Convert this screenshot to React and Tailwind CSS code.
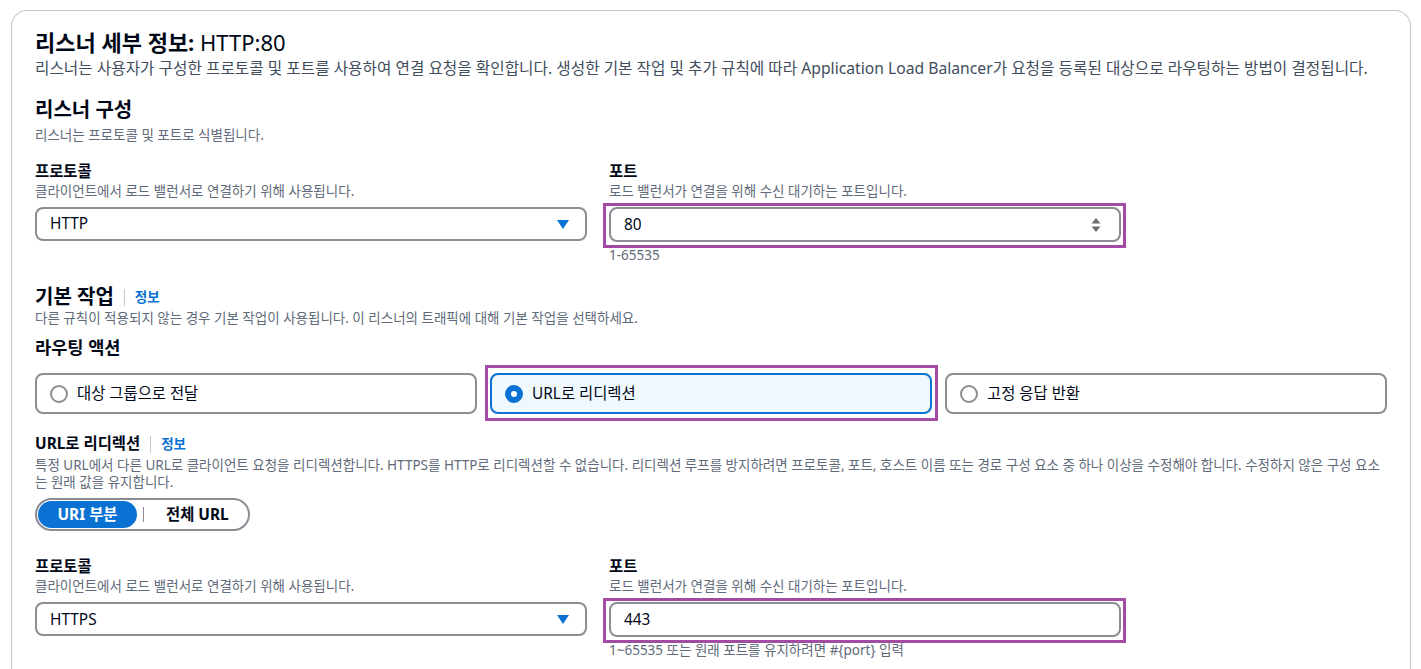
import React from 'react'

const font = { fontFamily: '"Noto Sans", "Noto Sans CJK KR", sans-serif' }

function Highlight({ className }) {
  return <div className={`pointer-events-none absolute border-[3px] border-[#a24ba3] ${className}`} />
}

function Caret() {
  return (
    <svg width="12" height="9" viewBox="0 0 12 9" className="shrink-0">
      <path d="M0 0h12L6 9z" fill="#0972d3" />
    </svg>
  )
}

function Select({ value }) {
  return (
    <div className="flex h-[34px] items-center justify-between rounded-lg border-2 border-[#8c8c94] bg-white pl-[13px] pr-[16px] text-[15.4px] text-[#000716]">
      <span>{value}</span>
      <Caret />
    </div>
  )
}

function NumberInput({ value, spinner }) {
  return (
    <div className="flex h-[35px] items-center justify-between rounded-lg border-2 border-[#8c8c94] bg-white pl-[13px] pr-[18px] text-[15.4px] text-[#000716]">
      <span>{value}</span>
      {spinner && (
        <svg width="10" height="16" viewBox="0 0 10 16">
          <path d="M5 1L9.5 6.5H0.5z" fill="#6b6b73" />
          <path d="M5 15L9.5 9.5H0.5z" fill="#6b6b73" />
        </svg>
      )}
    </div>
  )
}

function Field({ label, desc, children, hint }) {
  return (
    <div className="flex flex-col">
      <div className="text-[15.4px] font-bold leading-[20px] text-[#000716]">{label}</div>
      <div className="mt-[1px] text-[13.5px] leading-[16px] text-[#5f6b7a]">{desc}</div>
      <div className="mt-[8px]">{children}</div>
      {hint && <div className="mt-[5px] text-[13.5px] leading-[16px] text-[#5f6b7a]">{hint}</div>}
    </div>
  )
}

function Radio({ checked }) {
  if (checked) {
    return <span className="block h-[18px] w-[18px] shrink-0 rounded-full border-[6px] border-[#0972d3] bg-white" />
  }
  return <span className="block h-[18px] w-[18px] shrink-0 rounded-full border-2 border-[#8c8c94] bg-white" />
}

function Tile({ label, checked, highlight }) {
  return (
    <div className="relative">
      <div
        className={`flex h-[41px] items-center gap-[9px] rounded-lg border-2 pl-[13px] text-[15.4px] text-[#000716] ${
          checked ? 'border-[#0972d3] bg-[#f0f8ff]' : 'border-[#8c8c94] bg-white'
        }`}
      >
        <Radio checked={checked} />
        <span>{label}</span>
      </div>
      {highlight && <Highlight className="left-[-5px] right-[-6px] top-[-8px] bottom-[-7px]" />}
    </div>
  )
}

function InfoLink() {
  return (
    <>
      <span className="mx-[10px] h-[17px] w-px bg-[#c6c6cd]" />
      <span className="text-[13.5px] font-bold text-[#0972d3]">정보</span>
    </>
  )
}

export default function App() {
  return (
    <div className="min-h-screen bg-white pl-[11px] pr-[10px] pt-[10px]" style={font}>
      <div className="h-[680px] rounded-t-2xl border border-b-0 border-[#c6c6cd] px-[23px] pt-[17px]">
        <h1 className="text-[22px] leading-[28px] text-[#000716]">
          <span className="font-bold">리스너 세부 정보:</span> HTTP:80
        </h1>
        <p className="mt-[2px] whitespace-nowrap text-[15.7px] leading-[20px] text-[#414d5c]">
          리스너는 사용자가 구성한 프로토콜 및 포트를 사용하여 연결 요청을 확인합니다. 생성한 기본 작업 및 추가 규칙에 따라 Application Load Balancer가 요청을 등록된 대상으로 라우팅하는 방법이 결정됩니다.
        </p>

        <h2 className="mt-[20px] text-[20px] font-bold leading-[24px] text-[#000716]">리스너 구성</h2>
        <p className="mt-[5px] text-[13.5px] leading-[16px] text-[#5f6b7a]">리스너는 프로토콜 및 포트로 식별됩니다.</p>

        <div className="mt-[19px] grid grid-cols-[552px_512px] gap-x-[22px]">
          <Field label="프로토콜" desc="클라이언트에서 로드 밸런서로 연결하기 위해 사용됩니다.">
            <Select value="HTTP" />
          </Field>
          <Field label="포트" desc="로드 밸런서가 연결을 위해 수신 대기하는 포트입니다." hint="1-65535">
            <div className="relative">
              <NumberInput value="80" spinner />
              <Highlight className="left-[-6px] right-[-5px] top-[-4px] bottom-[-6px]" />
            </div>
          </Field>
        </div>

        <div className="mt-[22px] flex items-center">
          <h2 className="text-[20px] font-bold leading-[24px] text-[#000716]">기본 작업</h2>
          <InfoLink />
        </div>
        <p className="mt-[1px] text-[13.5px] leading-[16px] text-[#5f6b7a]">
          다른 규칙이 적용되지 않는 경우 기본 작업이 사용됩니다. 이 리스너의 트래픽에 대해 기본 작업을 선택하세요.
        </p>

        <h3 className="mt-[10px] text-[17.6px] font-bold leading-[22px] text-[#000716]">라우팅 액션</h3>
        <div className="mt-[15px] grid grid-cols-3 gap-[13px]">
          <Tile label="대상 그룹으로 전달" />
          <Tile label="URL로 리디렉션" checked highlight />
          <Tile label="고정 응답 반환" />
        </div>

        <div className="mt-[20px] flex items-center">
          <h3 className="text-[15.4px] font-bold leading-[20px] text-[#000716]">URL로 리디렉션</h3>
          <InfoLink />
        </div>
        <p className="mt-[3px] text-[13.5px] leading-[17px] text-[#5f6b7a]">
          <span className="whitespace-nowrap">
            특정 URL에서 다른 URL로 클라이언트 요청을 리디렉션합니다. HTTPS를 HTTP로 리디렉션할 수 없습니다. 리디렉션 루프를 방지하려면 프로토콜, 포트, 호스트 이름 또는 경로 구성 요소 중 하나 이상을 수정해야 합니다. 수정하지 않은 구성 요소
          </span>
          <br />
          는 원래 값을 유지합니다.
        </p>

        <div className="mt-[7px] flex h-[33px] w-[215px] items-center rounded-full border-2 border-[#8c8c94] p-[1px]">
          <span className="flex h-[27px] w-[99px] items-center justify-center rounded-full bg-[#0972d3] text-[15.4px] font-bold text-white">
            URI 부분
          </span>
          <span className="ml-[6px] h-[15px] w-px bg-[#8c8c94]" />
          <span className="ml-[22px] text-[15.4px] font-bold text-[#000716]">전체 URL</span>
        </div>

        <div className="mt-[26px] grid grid-cols-[552px_512px] gap-x-[22px]">
          <Field label="프로토콜" desc="클라이언트에서 로드 밸런서로 연결하기 위해 사용됩니다.">
            <Select value="HTTPS" />
          </Field>
          <Field label="포트" desc="로드 밸런서가 연결을 위해 수신 대기하는 포트입니다." hint="1~65535 또는 원래 포트를 유지하려면 #{port} 입력">
            <div className="relative">
              <NumberInput value="443" />
              <Highlight className="left-[-6px] right-[-5px] top-[-4px] bottom-[-6px]" />
            </div>
          </Field>
        </div>
      </div>
    </div>
  )
}
